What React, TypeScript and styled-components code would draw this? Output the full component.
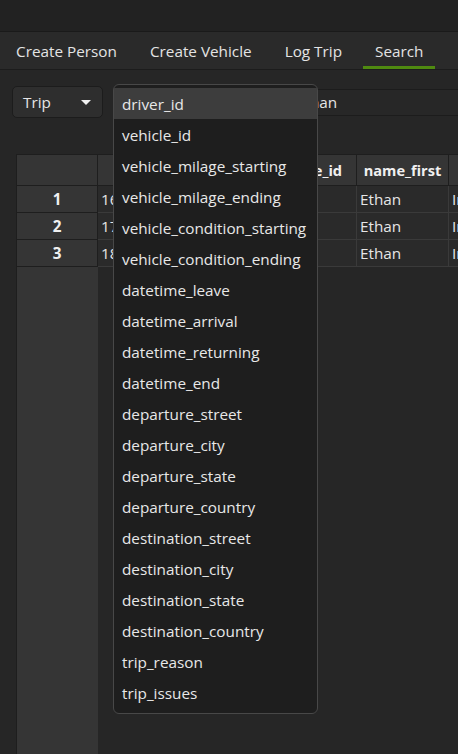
import React from "react";
import styled, { createGlobalStyle } from "styled-components";

const GlobalStyle = createGlobalStyle`
  html, body { margin: 0; padding: 0; background: #262626; }
  body { font-family: "Open Sans", "Noto Sans", sans-serif; color: #e6e6e6; }
  #root { height: 100vh; }
`;

const FONT = "15.3px";

const Window = styled.div`
  height: 100vh;
  display: flex;
  flex-direction: column;
  overflow: hidden;
  position: relative;
  background: #262626;
`;

const TitleStrip = styled.div`
  height: 31px;
  background: #222222;
  border-bottom: 1px solid #1a1a1a;
  flex: none;
`;

const TabBar = styled.div`
  height: 37px;
  background: #2a2a2a;
  border-bottom: 1px solid #1c1c1c;
  display: flex;
  align-items: stretch;
  gap: 9px;
  padding-left: 4px;
  flex: none;
`;

const Tab = styled.div<{ $active?: boolean }>`
  padding: 0 12px;
  display: flex;
  align-items: center;
  font-size: ${FONT};
  color: #e4e4e4;
  box-sizing: border-box;
  border-bottom: 3px solid ${(p) => (p.$active ? "#4f8a10" : "transparent")};
  padding-top: 3px;
`;

const Controls = styled.div`
  display: flex;
  align-items: center;
  padding: 16px 0 0 12px;
  width: calc(100% + 20px);
  box-sizing: border-box;
  flex: none;
`;

const Combo = styled.div<{ $width: number }>`
  width: ${(p) => p.$width}px;
  height: 32px;
  box-sizing: border-box;
  background: #2e2e2e;
  border: 1px solid #1c1c1c;
  border-radius: 5px;
  display: flex;
  align-items: center;
  justify-content: space-between;
  padding: 0 11px 0 10px;
  font-size: ${FONT};
  color: #e6e6e6;
  flex: none;
`;

const Arrow = styled.span`
  width: 0;
  height: 0;
  border-left: 5px solid transparent;
  border-right: 5px solid transparent;
  border-top: 5px solid #f0f0f0;
`;

const SearchInput = styled.div`
  flex: 1;
  height: 27px;
  box-sizing: border-box;
  margin-left: 8px;
  background: #272727;
  border: 1px solid #1c1c1c;
  display: flex;
  align-items: center;
  padding-left: 8px;
  font-size: ${FONT};
  color: #e6e6e6;
`;

const TableView = styled.div`
  flex: 1;
  display: flex;
  margin: 36px 0 0 16px;
  min-height: 0;
`;

const VerticalHeader = styled.div`
  width: 82px;
  flex: none;
  background: #353535;
  border-left: 1px solid #1e1e1e;
  border-top: 1px solid #1e1e1e;
  box-sizing: border-box;
  display: flex;
  flex-direction: column;
`;

const CornerCell = styled.div`
  height: 31px;
  box-sizing: border-box;
  border-bottom: 1px solid #1e1e1e;
  border-right: 1px solid #1e1e1e;
`;

const RowHeaderCell = styled.div`
  height: 27px;
  box-sizing: border-box;
  border-bottom: 1px solid #1e1e1e;
  border-right: 1px solid #1e1e1e;
  display: flex;
  align-items: center;
  justify-content: center;
  font-weight: 700;
  font-size: ${FONT};
  color: #f0f0f0;
`;

const DataArea = styled.div`
  flex: 1;
  border-top: 1px solid #1e1e1e;
  display: flex;
  flex-direction: column;
  min-width: 0;
`;

const Row = styled.div`
  display: flex;
  flex: none;
`;

const HeaderCell = styled.div<{ $w: number }>`
  width: ${(p) => p.$w}px;
  flex: none;
  height: 31px;
  box-sizing: border-box;
  background: #353535;
  border-right: 1px solid #1e1e1e;
  border-bottom: 1px solid #1e1e1e;
  display: flex;
  align-items: center;
  justify-content: center;
  font-weight: 700;
  font-size: 14.6px;
  color: #f0f0f0;
  white-space: nowrap;
  overflow: hidden;
`;

const DataCell = styled.div<{ $w: number }>`
  width: ${(p) => p.$w}px;
  flex: none;
  height: 27px;
  box-sizing: border-box;
  background: #2a2a2a;
  border-right: 1px solid #3a3a3a;
  border-bottom: 1px solid #3a3a3a;
  display: flex;
  align-items: center;
  padding-left: 3px;
  font-size: ${FONT};
  color: #e6e6e6;
  white-space: nowrap;
  overflow: hidden;
`;

const Popup = styled.div`
  position: absolute;
  left: 113px;
  top: 84px;
  width: 205px;
  box-sizing: border-box;
  background: #1e1e1e;
  border: 1px solid #484848;
  border-radius: 6px;
  padding: 3px 0 5px;
`;

const PopupItem = styled.div<{ $hl?: boolean }>`
  height: 31px;
  display: flex;
  align-items: center;
  padding-left: 8px;
  font-size: ${FONT};
  color: #e8e8e8;
  background: ${(p) => (p.$hl ? "#3d3d3d" : "transparent")};
  white-space: nowrap;
`;

const columns = [
  { name: "id", w: 48 },
  { name: "birth_date", w: 112 },
  { name: "license_id", w: 99 },
  { name: "name_first", w: 92 },
  { name: "name_last", w: 100 },
];

const rows = [
  ["16", "1990-04-12", "4", "Ethan", "Irwin"],
  ["17", "1990-04-12", "5", "Ethan", "Irwin"],
  ["18", "1990-04-12", "6", "Ethan", "Irwin"],
];

const fields = [
  "driver_id",
  "vehicle_id",
  "vehicle_milage_starting",
  "vehicle_milage_ending",
  "vehicle_condition_starting",
  "vehicle_condition_ending",
  "datetime_leave",
  "datetime_arrival",
  "datetime_returning",
  "datetime_end",
  "departure_street",
  "departure_city",
  "departure_state",
  "departure_country",
  "destination_street",
  "destination_city",
  "destination_state",
  "destination_country",
  "trip_reason",
  "trip_issues",
];

export default function App() {
  return (
    <Window>
      <GlobalStyle />
      <TitleStrip />
      <TabBar>
        <Tab>Create Person</Tab>
        <Tab>Create Vehicle</Tab>
        <Tab>Log Trip</Tab>
        <Tab $active>Search</Tab>
      </TabBar>
      <Controls>
        <Combo $width={91}>
          Trip
          <Arrow />
        </Combo>
        <Combo $width={165} style={{ marginLeft: 11 }}>
          name_first
          <Arrow />
        </Combo>
        <SearchInput>Ethan</SearchInput>
      </Controls>
      <TableView>
        <VerticalHeader>
          <CornerCell />
          {rows.map((_, i) => (
            <RowHeaderCell key={i}>{i + 1}</RowHeaderCell>
          ))}
        </VerticalHeader>
        <DataArea>
          <Row>
            {columns.map((c) => (
              <HeaderCell key={c.name} $w={c.w}>
                {c.name}
              </HeaderCell>
            ))}
          </Row>
          {rows.map((r, i) => (
            <Row key={i}>
              {r.map((v, j) => (
                <DataCell key={j} $w={columns[j].w}>
                  {v}
                </DataCell>
              ))}
            </Row>
          ))}
        </DataArea>
      </TableView>
      <Popup>
        {fields.map((f, i) => (
          <PopupItem key={f} $hl={i === 0}>
            {f}
          </PopupItem>
        ))}
      </Popup>
    </Window>
  );
}
